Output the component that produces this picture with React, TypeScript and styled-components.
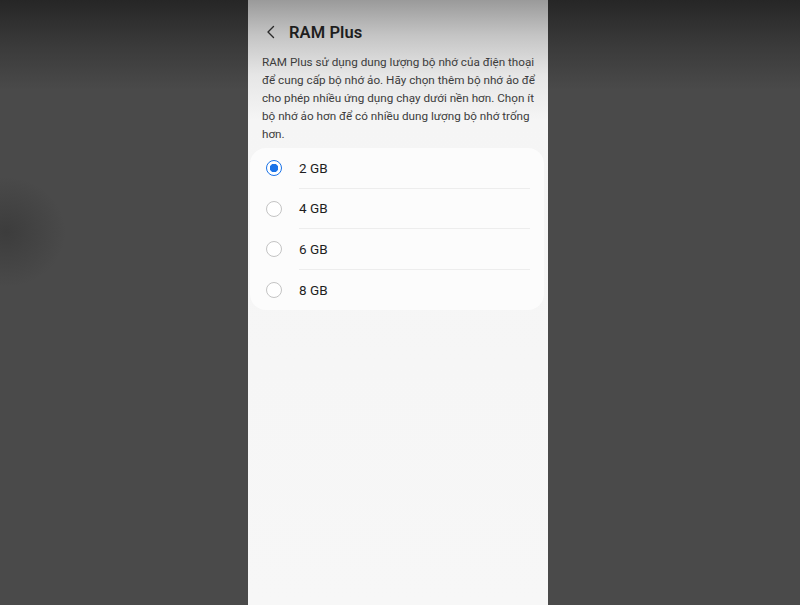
import { useState } from 'react'
import styled, { createGlobalStyle } from 'styled-components'

const GlobalStyle = createGlobalStyle`
  html, body {
    margin: 0;
    padding: 0;
    height: 100%;
  }
  body {
    font-family: 'Roboto', 'Noto Sans', sans-serif;
    background: #4a4a4a;
  }
`

const options = ['2 GB', '4 GB', '6 GB', '8 GB']

const description = [
  'RAM Plus sử dụng dung lượng bộ nhớ của điện thoại',
  'để cung cấp bộ nhớ ảo. Hãy chọn thêm bộ nhớ ảo để',
  'cho phép nhiều ứng dụng chạy dưới nền hơn. Chọn ít',
  'bộ nhớ ảo hơn để có nhiều dung lượng bộ nhớ trống',
  'hơn.',
]

const App = () => {
  const [selected, setSelected] = useState('2 GB')

  return (
    <>
      <GlobalStyle />
      <Stage>
        <Screen>
          <Header>
            <BackButton aria-label="Back">
              <svg width="10" height="14" viewBox="0 0 10 14" fill="none">
                <path
                  d="M7.5 1.5L2 7l5.5 5.5"
                  stroke="#2a2a2a"
                  strokeWidth="1.4"
                  strokeLinecap="round"
                  strokeLinejoin="round"
                />
              </svg>
            </BackButton>
            <Title>RAM Plus</Title>
          </Header>
          <Description>
            {description.map((line) => (
              <Line key={line}>{line}</Line>
            ))}
          </Description>
          <Card>
            {options.map((opt, i) => (
              <Option key={opt} onClick={() => setSelected(opt)}>
                <Radio checked={selected === opt} />
                <OptionLabel last={i === options.length - 1}>{opt}</OptionLabel>
              </Option>
            ))}
          </Card>
        </Screen>
      </Stage>
    </>
  )
}

const Stage = styled.div`
  display: flex;
  height: 605px;
  padding-left: 248px;
  background:
    radial-gradient(ellipse 60px 55px at 6px 232px, rgba(35, 35, 35, 0.35), transparent),
    linear-gradient(#262626 0px, #3a3a3a 45px, #4a4a4a 90px, #4a4a4a 100%);
  overflow: hidden;
`

const Screen = styled.div`
  width: 300px;
  height: 605px;
  display: flex;
  flex-direction: column;
  background: linear-gradient(#9a9a9a 0px, #c4c4c4 35px, #e6e6e6 75px, #f5f5f5 120px, #f7f7f7 100%);
`

const Header = styled.div`
  display: flex;
  align-items: center;
  height: 28px;
  margin-top: 18px;
  padding-left: 16px;
`

const BackButton = styled.button`
  display: flex;
  align-items: center;
  justify-content: center;
  width: 14px;
  height: 20px;
  padding: 0;
  border: none;
  background: transparent;
  cursor: pointer;
`

const Title = styled.h1`
  margin: 0 0 0 11px;
  font-size: 16.5px;
  font-weight: 600;
  color: #1e1e1e;
  letter-spacing: 0.1px;
`

const Description = styled.div`
  display: flex;
  flex-direction: column;
  margin-top: 7px;
  padding-left: 14px;
  font-family: 'Roboto', 'Noto Sans', sans-serif;
  font-size: 11.7px;
  line-height: 18px;
  color: #3c3c3c;
`

const Line = styled.span`
  white-space: nowrap;
`

const Card = styled.div`
  display: flex;
  flex-direction: column;
  margin: 5px 4px 0 2px;
  padding: 0 14px 0 0;
  border-radius: 16px;
  background: #fcfcfc;
`

const Option = styled.div`
  display: flex;
  align-items: stretch;
  height: 40.6px;
  cursor: pointer;
`

const Radio = styled.span<{ checked: boolean }>`
  flex: none;
  align-self: center;
  box-sizing: border-box;
  width: 16px;
  height: 16px;
  margin: 0 17px 0 16px;
  border-radius: 50%;
  border: 1.5px solid ${(p) => (p.checked ? '#1a73e8' : '#c4c4c4')};
  background: ${(p) =>
    p.checked
      ? 'radial-gradient(circle, #1a73e8 0 4px, #fff 4.5px)'
      : '#fff'};
`

const OptionLabel = styled.span<{ last: boolean }>`
  flex: 1;
  display: flex;
  align-items: center;
  font-size: 13.5px;
  font-weight: 400;
  color: #1f1f1f;
  border-bottom: ${(p) => (p.last ? 'none' : '1.5px solid #ededed')};
`

export default App
